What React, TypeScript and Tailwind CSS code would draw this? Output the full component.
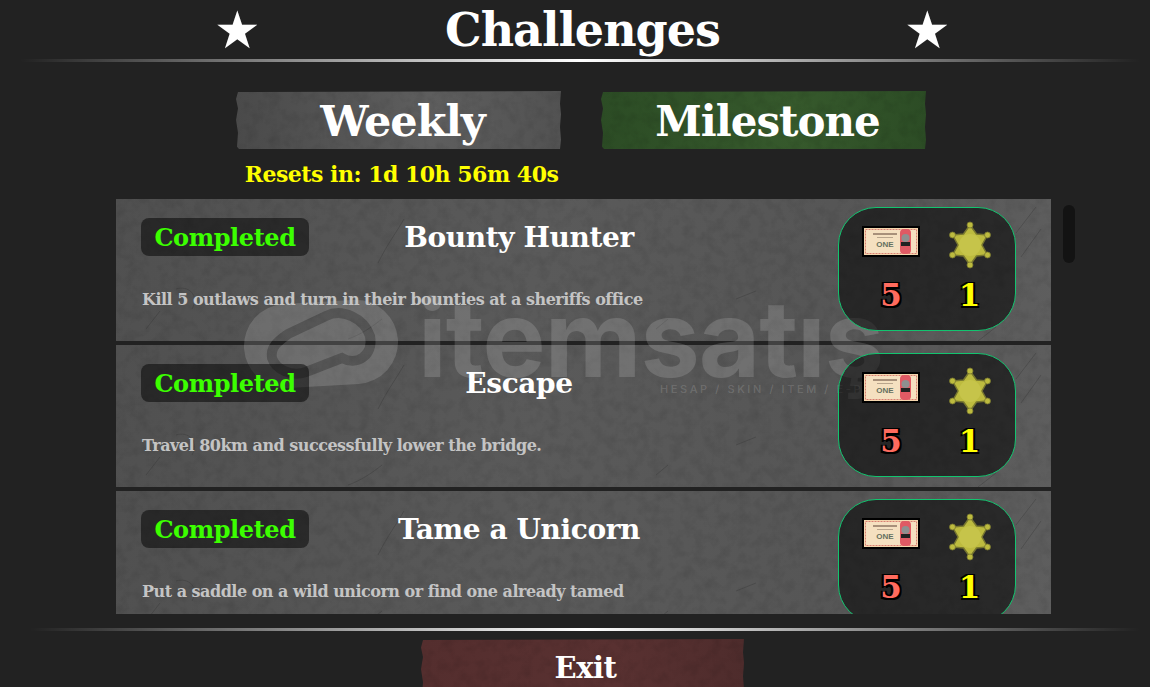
const serif = "font-['DejaVu_Serif',serif]";

const rows = [
  { title: 'Bounty Hunter', desc: 'Kill 5 outlaws and turn in their bounties at a sheriffs office' },
  { title: 'Escape', desc: 'Travel 80km and successfully lower the bridge.' },
  { title: 'Tame a Unicorn', desc: 'Put a saddle on a wild unicorn or find one already tamed' },
];

// concrete look used on rows and buttons
function Grain({ id, seed = 4 }: { id: string; seed?: number }) {
  return (
    <svg className="absolute inset-0 h-full w-full opacity-10" aria-hidden="true">
      <filter id={id}>
        <feTurbulence type="fractalNoise" baseFrequency="0.09" numOctaves="5" seed={seed} />
        <feColorMatrix values="0 0 0 0 0 0 0 0 0 0 0 0 0 0 0 0 0 0 1.7 -0.7" />
      </filter>
      <rect width="100%" height="100%" filter={`url(#${id})`} />
    </svg>
  );
}

function Scratches() {
  return (
    <svg className="absolute inset-0 h-full w-full opacity-30" fill="none" stroke="#2e2e2e" strokeWidth="1" aria-hidden="true">
      <path d="M288 20C280 34 272 44 262 64M266 120C256 128 244 136 232 140" />
      <path d="M920 8L900 34M925 30L905 58M880 128L862 142M60 90C72 86 84 96 76 110" />
      <path d="M30 130L44 112M620 100L640 92M540 130L552 120" />
    </svg>
  );
}

function Ticket() {
  return (
    <svg width="58" height="31" viewBox="0 0 58 31" aria-hidden="true">
      <rect x="1" y="1" width="56" height="29" fill="#f4d6ae" stroke="#000" strokeWidth="2" />
      <rect x="3.5" y="3.5" width="51" height="24" fill="#f5e0c0" stroke="#d97f72" strokeWidth="1" strokeDasharray="2 1" />
      <rect x="11" y="7" width="24" height="2" fill="#a8907a" />
      <rect x="15" y="11" width="16" height="1" fill="#b9a58c" />
      <text x="23" y="21" textAnchor="middle" fontSize="8" fontWeight="700" fill="#66705f" fontFamily="Liberation Sans, sans-serif">ONE</text>
      <rect x="38" y="3" width="11" height="25" rx="4" fill="#e05a64" />
      <circle cx="43.5" cy="12" r="4" fill="#8f9090" />
      <rect x="39" y="16" width="9" height="4" fill="#222" />
    </svg>
  );
}

function Badge() {
  const tips = [
    [24, 4],
    [41.5, 14],
    [41.5, 34],
    [24, 44],
    [6.5, 34],
    [6.5, 14],
  ];
  return (
    <svg width="48" height="48" viewBox="0 0 48 48" aria-hidden="true">
      <polygon points="24,4 30.5,13 41.5,14 36,24 41.5,34 30.5,35 24,44 17.5,35 6.5,34 12,24 6.5,14 17.5,13" fill="#bdbb3f" stroke="#77762f" strokeWidth="1.5" strokeLinejoin="round" />
      {tips.map(([x, y]) => (
        <circle key={`${x}-${y}`} cx={x} cy={y} r="3" fill="#bdbb3f" stroke="#77762f" strokeWidth="0.8" />
      ))}
      <circle cx="24" cy="24" r="11" fill="#c6c44a" />
    </svg>
  );
}

function Rewards() {
  return (
    <div className="relative z-20 grid h-[124px] w-[178px] shrink-0 auto-rows-min grid-cols-2 rounded-[38px] border border-[#12c46f] bg-black/55 pt-[11px]">
      <div className="flex h-[50px] items-start justify-center pl-[16px] pt-[7px]">
        <Ticket />
      </div>
      <div className="flex h-[50px] items-center justify-center pr-[3px] pt-[1px]">
        <Badge />
      </div>
      <div className={`${serif} pl-[16px] text-center text-[31px] font-bold leading-[52px] text-[#ff6b5e] [text-shadow:-2px_-1px_0_#000,2px_-1px_0_#000,-2px_2px_0_#000,2px_2px_0_#000]`}>5</div>
      <div className={`${serif} pr-[3px] text-center text-[31px] font-bold leading-[52px] text-[#ffff00] [text-shadow:-2px_-1px_0_#000,2px_-1px_0_#000,-2px_2px_0_#000,2px_2px_0_#000]`}>1</div>
    </div>
  );
}

function Row({ index, title, desc }: { index: number; title: string; desc: string }) {
  return (
    <div className="relative h-[142px] shrink-0 bg-[linear-gradient(100deg,#505050,#5a5a5a_45%,#565656_75%,#5e5e5e)]">
      <Grain id={`grain-${index}`} seed={index + 3} />
      <Scratches />
      <div className="flex h-full items-start pl-[25px] pr-[35px] pt-[8px]">
        <div className="relative z-20 flex-1">
          <div className="mt-[11px] flex h-[38px] items-center">
            <div className={`${serif} flex h-[38px] w-[168px] shrink-0 items-center justify-center rounded-lg bg-black/50 pt-[1px] text-[24px] font-bold tracking-[-0.4px] text-[#3cff00]`}>
              Completed
            </div>
            <div className={`${serif} ml-[10px] flex-1 pr-[119px] pt-[1px] text-center text-[28px] font-bold tracking-[-0.4px] text-white`}>
              {title}
            </div>
          </div>
          <div className={`${serif} mt-[32px] pl-[1px] text-[16px] font-bold tracking-[-0.5px] text-[#c4c4c4]`}>
            {desc}
          </div>
        </div>
        <Rewards />
      </div>
    </div>
  );
}

function Watermark() {
  return (
    <div className="pointer-events-none absolute left-[126px] top-[96px] z-10 h-[200px] w-[770px] text-white/15">
      <svg className="absolute left-0 top-[5px]" width="160" height="92" viewBox="0 0 160 92" aria-hidden="true">
        <mask id="logo-cut">
          <path d="M44 46L114 42" stroke="#fff" strokeWidth="84" strokeLinecap="round" />
          <path d="M100 58L64 72C50 77 34 70 30 58C28 46 38 40 46 34L84 16C100 8 122 18 128 36C132 56 114 66 100 58Z" fill="none" stroke="#000" strokeWidth="10" />
        </mask>
        <rect width="160" height="92" fill="currentColor" mask="url(#logo-cut)" />
      </svg>
      <div className="absolute left-[176px] top-[-20px] font-['Inter',sans-serif] text-[106px] font-bold leading-[128px] tracking-[-1px]">itemsatış</div>
      <div className="absolute left-[418px] top-[86px] font-['Inter',sans-serif] text-[11px] font-medium tracking-[2.6px]">HESAP / SKIN / ITEM / E-PIN</div>
    </div>
  );
}

function Divider({ className }: { className: string }) {
  return <div className={`h-[3px] bg-[linear-gradient(90deg,transparent,#ffffff_50%,transparent)] ${className}`} />;
}

const tornEdge = '[clip-path:polygon(2px_1px,100%_0,calc(100%-1px)_22%,100%_40%,calc(100%-1px)_62%,100%_84%,calc(100%-1px)_100%,3px_100%,1px_96%,2px_72%,0_50%,2px_30%,0_14%)]';

export default function App() {
  return (
    <div className={`relative h-[687px] w-[1150px] overflow-hidden bg-[#222222] ${serif}`}>
      <div className="flex h-[59px] items-center justify-center pl-[15px]">
        <span className="w-[50px] text-center text-[52px] leading-none text-white">★</span>
        <h1 className="w-[640px] text-center text-[46px] font-bold leading-none tracking-[-1px] text-white">Challenges</h1>
        <span className="w-[50px] text-center text-[52px] leading-none text-white">★</span>
      </div>
      <Divider className="ml-[20px] mr-[10px]" />

      <div className="mt-[29px] flex justify-center gap-[40px] pl-[12px]">
        <div className={`relative flex h-[58px] w-[325px] items-center justify-center bg-[linear-gradient(90deg,#4a4a4a,#5e5e5e_60%,#525252)] pl-[8px] pt-[3px] text-[43px] font-bold tracking-[-1px] text-white ${tornEdge}`}>
          <Grain id="grain-weekly" seed={9} />
          <span className="relative">Weekly</span>
        </div>
        <div className={`relative flex h-[58px] w-[325px] items-center justify-center bg-[linear-gradient(90deg,#2c4c25,#36592c_60%,#2c4c25)] pl-[8px] pt-[3px] text-[42px] font-bold tracking-[-1px] text-white ${tornEdge}`}>
          <Grain id="grain-milestone" seed={11} />
          <span className="relative">Milestone</span>
        </div>
      </div>

      <div className="h-[50px] w-[803px] pt-[10px] text-center text-[22px] font-bold leading-[30px] tracking-[-0.5px] text-[#ffff00]">
        Resets in: 1d 10h 56m 40s
      </div>

      <div className="flex h-[415px] items-start">
        <div className="relative ml-[116px] flex h-full w-[935px] flex-col gap-[4px] overflow-hidden">
          {rows.map((row, index) => (
            <Row key={row.title} index={index} title={row.title} desc={row.desc} />
          ))}
          <Watermark />
        </div>
        <div className="ml-[12px] mt-[6px] h-[58px] w-[12px] rounded-md bg-[#131313]" />
      </div>

      <Divider className="ml-[30px] mr-[10px] mt-[14px]" />

      <div className="mt-[8px] flex justify-center pl-[15px]">
        <div className={`relative flex h-[60px] w-[323px] items-center justify-center bg-[linear-gradient(90deg,#542e2e,#593131_60%,#4e2c2c)] pb-[1px] pl-[6px] text-[29px] font-bold tracking-[-0.5px] text-white ${tornEdge}`}>
          <Grain id="grain-exit" seed={14} />
          <span className="relative">Exit</span>
        </div>
      </div>
    </div>
  );
}
